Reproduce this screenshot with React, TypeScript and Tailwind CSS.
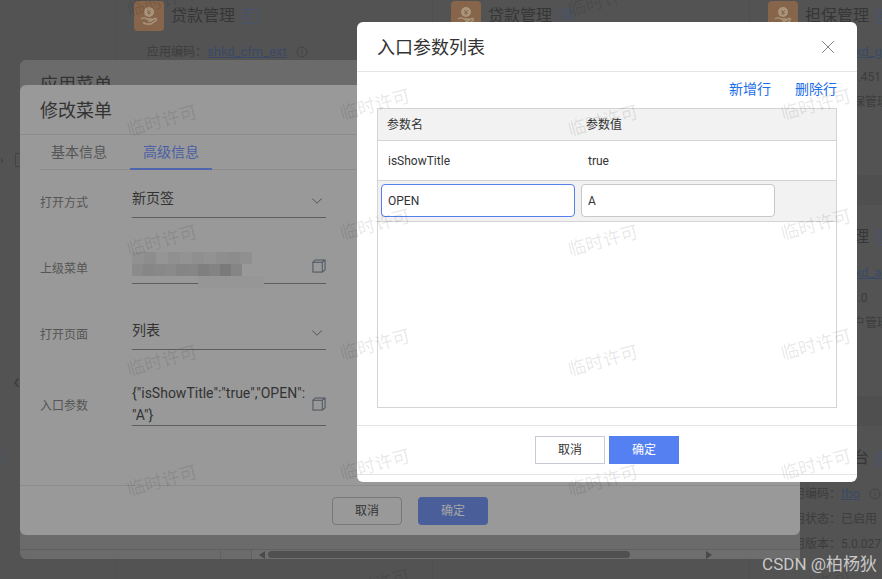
import { ChevronDown, Info, X } from "lucide-react";

const FONT = "font-['Roboto','Noto_Sans_CJK_SC',sans-serif]";

const cards = [
  [
    { title: "贷款管理", tag: "扩", code: "shkd_cfm_ext", l2: "应用版本：5.0.451", l3: "应用分组：贷款管理" },
    { title: "贷款管理", tag: "原", code: "shkd_cfm", l2: "应用版本：5.0.451", l3: "应用分组：贷款管理" },
    { title: "担保管理", tag: "扩", code: "shkd_gm_ext", l2: "应用版本：5.0.451", l3: "应用分组：担保管理" },
  ],
  [
    { title: "客户管理", tag: "扩", code: "shkd_ar", l2: "应用版本：5.0.0", l3: "应用分组：客户管理" },
    { title: "客户管理", tag: "原", code: "shkd_ar", l2: "应用版本：5.0.0", l3: "应用分组：客户管理" },
    { title: "账户管理", tag: "扩", code: "shkd_ar_ext", l2: "应用版本：5.0.0", l3: "应用分组：客户管理" },
  ],
  [
    { title: "交易平台", tag: "原", code: "tbo", l2: "应用状态：已启用", l3: "应用版本：5.0.027" },
    { title: "交易平台", tag: "原", code: "tbo", l2: "应用状态：已启用", l3: "应用版本：5.0.027" },
    { title: "交易平台", tag: "原", code: "tbo", l2: "应用状态：已启用", l3: "应用版本：5.0.027" },
  ],
];

const mosaicTop = ["bg-[#919191]", "bg-[#8d8d8d]", "bg-[#959595]", "bg-[#909090]", "bg-[#939393]", "bg-[#8f8f8f]", "bg-[#929292]", "bg-[#8e8e8e]", "bg-[#8c8c8c]", "bg-[#909090]"];
const mosaicBottom = ["bg-[#8b8b8b]", "bg-[#868686]", "bg-[#888888]", "bg-[#8a8a8a]", "bg-[#858585]", "bg-[#868686]", "bg-[#7f7f7f]", "bg-[#838383]", "bg-[#7a7a7a]", "bg-[#858585]"];

function CopyIcon() {
  return (
    <svg width="14" height="14" viewBox="0 0 15 15" fill="none" stroke="#4f5762" strokeWidth="1.1">
      <rect x="1" y="3.5" width="10" height="10.5" />
      <path d="M1 3.5 3.5 1H14V11.5L11 14M11 3.5 14 1" />
    </svg>
  );
}

function LoanIcon() {
  return (
    <svg width="22" height="22" viewBox="0 0 22 22" fill="none" stroke="#a8957c" strokeWidth="1.4">
      <circle cx="11" cy="7" r="5" fill="#a8957c" stroke="none" />
      <path d="M9 5l2 2 2-2M11 7v3M9 8h4" stroke="#86654a" strokeWidth="1" />
      <path d="M3 14c2-1.500 4-1.500 6 0h4c1.500 0 1.500 2 0 2h-3M13 15.500l4-2c1.500-.5 2 1 1 2l-5 3.500H8l-3-1.500" />
    </svg>
  );
}

function Watermark({ top, ml }: { top: string; ml: string }) {
  return (
    <div className={`flex w-[70px] flex-col ${top} ${ml}`}>
      {[0, 1, 2, 3, 4].map((i) => (
        <div key={i} className="flex h-[120px] items-center justify-center">
          <span className="-rotate-[15deg] whitespace-nowrap text-[18px] text-black/10">临时许可</span>
        </div>
      ))}
    </div>
  );
}

function Background() {
  return (
    <div className="-mt-[16px] flex">
      <div className="w-[115px] shrink-0 text-[#3c3c3c]">
        <div className="flex items-center gap-[11px] pt-[169px]">
          <span className="text-[12px] leading-none">›</span>
          <span className="h-[14px] w-[12px] border border-[#444]" />
        </div>
        <div className="pl-[13px] pt-[204px] text-[22px] leading-none">‹</div>
        <div className="mt-[57px] h-[14px] w-[3px] rounded-r-sm border border-l-0 border-[#4a5568]" />
      </div>
      <div className="flex-1">
        {cards.map((row, r) => (
          <div key={r}>
            <div className="grid h-[191px] grid-cols-[repeat(3,317px)]">
              {row.map((c, i) => (
                <div key={i} className="border-l border-[#4f4f4f] pl-[18px] pt-[17px]">
                  <div className="flex h-[30px] items-center">
                    <div className="flex size-[30px] shrink-0 items-center justify-center rounded bg-[#86654a]">
                      <LoanIcon />
                    </div>
                    <span className="ml-[7px] text-[16px] text-[#363636]">{c.title}</span>
                    <span className="ml-[7px] flex size-[15px] items-center justify-center border border-[#48526a] text-[11px] leading-none text-[#48526a]">
                      {c.tag}
                    </span>
                  </div>
                  <div className="ml-[13px] mt-[8px] flex h-[25px] items-center whitespace-nowrap text-[12px] text-[#3c3c3c]">
                    应用编码：<span className="text-[13px] text-[#3a4a66] underline">{c.code}</span>
                    <Info size={12} strokeWidth={1.4} className="ml-[9px] text-[#3e3e3e]" />
                  </div>
                  <div className="ml-[13px] flex h-[25px] items-center whitespace-nowrap text-[12px] text-[#3c3c3c]">
                    {c.l2}
                  </div>
                  <div className="ml-[13px] flex h-[25px] items-center whitespace-nowrap text-[12px] text-[#3c3c3c]">
                    {c.l3}
                  </div>
                </div>
              ))}
            </div>
            <div className="h-[30px] bg-[#4f4f4f]" />
          </div>
        ))}
      </div>
    </div>
  );
}

function AppMenuModal() {
  return (
    <div className="absolute left-[20px] top-[60px] flex h-[499px] w-[780px] flex-col rounded-md bg-[#6b6b6b]">
      <h2 className="px-5 pt-[12px] text-[18px] leading-[26px] text-[#333]">应用菜单</h2>
      <div className="mt-auto flex h-[10px] border-t border-[#606060] pl-[200px]">
        <div className="w-[32px] border-l border-r border-[#606060]" />
        <div className="flex flex-1 items-center bg-[#6e6e6e] pl-[7px]">
          <span className="h-0 w-0 border-y-[4px] border-r-[6px] border-y-transparent border-r-[#4a4a4a]" />
          <span className="ml-[3px] h-[7px] w-[362px] rounded-full bg-[#505050]" />
          <span className="ml-[76px] h-0 w-0 border-y-[4px] border-l-[6px] border-y-transparent border-l-[#4a4a4a]" />
        </div>
      </div>
    </div>
  );
}

function EditMenuModal() {
  return (
    <div className="absolute left-[20px] top-[85px] flex h-[450px] w-[780px] flex-col rounded-md bg-[#999999]">
      <div className="flex h-[50px] shrink-0 items-center border-b border-[#8c8c8c] px-5 pt-[2px]">
        <h2 className="text-[18px] text-[#333]">修改菜单</h2>
      </div>
      <div className="mx-5 flex h-[35px] shrink-0 items-end border-b border-[#8c8c8c] text-[14px]">
        <span className="flex h-full w-[90px] items-center pl-[11px] pt-[1px] text-[#555]">基本信息</span>
        <span className="-mb-px flex h-[35px] w-[82px] items-center justify-center border-b-2 border-[#4f65ad] pt-[1px] text-[#4a5fa6]">
          高级信息
        </span>
      </div>
      <div className="flex flex-col gap-[31px] px-5 pt-[13px] text-[14px] text-[#333]">
        <div className="flex items-center">
          <span className="w-[92px] pt-[4px] text-[12px] text-[#555]">打开方式</span>
          <div className="flex h-[35px] w-[194px] items-center justify-between border-b border-[#5e5e5e] pb-[4px]">
            <span>新页签</span>
            <ChevronDown size={18} strokeWidth={1.1} className="mt-[5px] text-[#444]" />
          </div>
        </div>
        <div className="flex items-center">
          <span className="w-[92px] pt-[4px] text-[12px] text-[#555]">上级菜单</span>
          <div className="relative flex h-[35px] w-[194px] items-center justify-end border-b border-[#5e5e5e]">
            <div className="absolute left-0 top-[3px] flex flex-col">
              <div className="flex">
                {mosaicTop.map((c, i) => (
                  <span key={i} className={`h-[12px] w-[12px] ${c}`} />
                ))}
              </div>
              <div className="flex">
                {mosaicBottom.map((c, i) => (
                  <span key={i} className={`h-[12px] w-[11px] ${c}`} />
                ))}
              </div>
            </div>
            <div className="absolute left-[66px] top-[27px] h-[12px] w-[66px] bg-[#969696]" />
            <CopyIcon />
          </div>
        </div>
        <div className="flex items-center">
          <span className="w-[92px] pt-[4px] text-[12px] text-[#555]">打开页面</span>
          <div className="flex h-[35px] w-[194px] items-center justify-between border-b border-[#5e5e5e] pb-[4px]">
            <span>列表</span>
            <ChevronDown size={18} strokeWidth={1.1} className="mt-[5px] text-[#444]" />
          </div>
        </div>
        <div className="flex items-center">
          <span className="w-[92px] pt-[4px] text-[12px] text-[#555]">入口参数</span>
          <div className="flex h-[45px] w-[194px] items-center justify-between border-b border-[#5e5e5e] pt-[1px]">
            <span className="whitespace-nowrap text-[14px] leading-[22px]">
              {'{"isShowTitle":"true","OPEN":'}
              <br />
              {'"A"}'}
            </span>
            <CopyIcon />
          </div>
        </div>
      </div>
      <div className="mt-auto flex h-[50px] shrink-0 justify-center gap-4 border-t border-[#8c8c8c] pt-[11px] text-[12px]">
        <button className="h-[28px] w-[70px] rounded-sm border border-[#777] text-[#333]">取消</button>
        <button className="h-[28px] w-[70px] rounded-sm bg-[#4a5f9a] text-[#a6a6a6]">确定</button>
      </div>
    </div>
  );
}

function ParamModal() {
  return (
    <div className="absolute left-[357px] top-[22px] flex h-[460px] w-[500px] flex-col rounded-md bg-white">
      <div className="flex h-[50px] shrink-0 items-center justify-between border-b border-[#e5e5e5] pl-5 pr-[18px] pt-[2px]">
        <h2 className="text-[18px] text-[#333]">入口参数列表</h2>
        <X size={22} strokeWidth={1} className="-mt-[2px] text-[#777]" />
      </div>
      <div className="flex h-[36px] shrink-0 items-center justify-end gap-6 pb-[1px] pr-5 text-[14px] text-[#1a6ee8]">
        <span>新增行</span>
        <span>删除行</span>
      </div>
      <div className="mx-5 h-[300px] shrink-0 border border-[#d4d4d4] text-[12px] text-[#333]">
        <div className="flex h-[32px] items-center border-b border-[#d4d4d4] bg-[#f2f2f2] pl-[9px]">
          <span className="w-[199px]">参数名</span>
          <span>参数值</span>
        </div>
        <div className="flex h-[40px] items-center border-b border-[#d4d4d4] pl-[10px]">
          <span className="w-[200px]">isShowTitle</span>
          <span>true</span>
        </div>
        <div className="flex h-[41px] items-start gap-[6px] border-b border-[#d4d4d4] bg-[#f2f2f2] pl-[3px] pt-[3px]">
          <input readOnly value="OPEN" className="h-[33px] w-[194px] rounded-sm border border-[#5580ee] bg-white px-[6px] outline-none" />
          <input readOnly value="A" className="h-[33px] w-[194px] rounded-sm border border-[#c8c8c8] bg-white px-[6px] outline-none" />
        </div>
      </div>
      <div className="mt-[17px] flex h-[50px] shrink-0 justify-center gap-1 border-y border-[#e5e5e5] pt-[10px] text-[12px]">
        <button className="h-[28px] w-[70px] border border-[#c5cad6] text-[#333]">取消</button>
        <button className="h-[28px] w-[70px] bg-[#5580f2] text-white">确定</button>
      </div>
    </div>
  );
}

export default function App() {
  return (
    <div className={`relative h-[579px] w-[882px] overflow-hidden bg-[#535353] ${FONT}`}>
      <Background />
      <AppMenuModal />
      <EditMenuModal />
      <ParamModal />
      <div className="pointer-events-none absolute inset-0 flex items-start pl-[127px]">
        <Watermark top="-mt-[60px]" ml="ml-0" />
        <Watermark top="mt-[44px]" ml="ml-[143px]" />
        <Watermark top="-mt-[60px]" ml="ml-[158px]" />
        <Watermark top="mt-[44px]" ml="ml-[143px]" />
      </div>
      <span className="absolute bottom-[2px] right-[5px] text-[17px] text-[#c8c8c8]">CSDN @柏杨狄</span>
    </div>
  );
}
